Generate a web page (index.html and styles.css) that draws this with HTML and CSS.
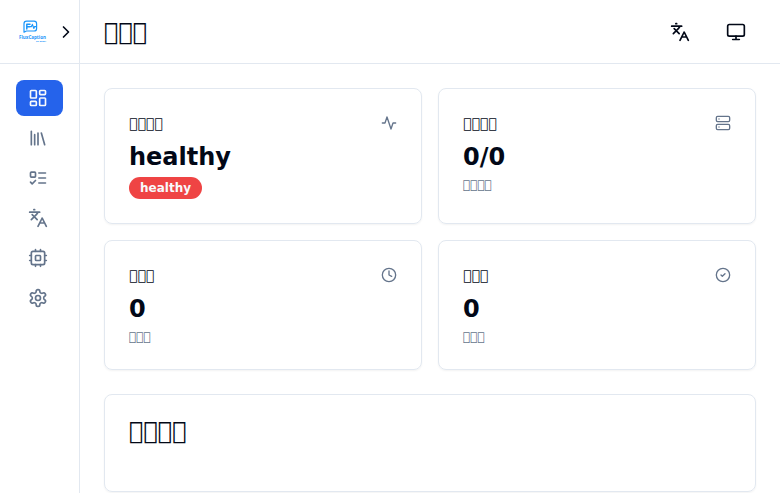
FILE: index.html
```html
<!DOCTYPE html>
<html lang="en">
<head>
<meta charset="utf-8">
<meta name="viewport" content="width=device-width, initial-scale=1">
<title>FluxCaption</title>
<link rel="stylesheet" href="styles.css">
</head>
<body>
<div class="app">
  <aside class="sidebar">
    <div class="brand">
      <svg class="logo" viewBox="0 0 32 32" role="img" aria-label="FluxCaption">
        <path class="logo-line" d="M8 16.2V7.8Q8 5.2 10.6 5.2H18Q20.6 5.2 20.6 7.8V12.4Q20.6 15 18 15H10.4Z"/>
        <path class="logo-line logo-mark" d="M10.8 13V8.2H14M10.8 10.7H13.6"/>
        <path class="logo-line" d="M14.2 10.7H15.3L16.4 8.4L17.8 12.4L18.6 10.6H20"/>
        <text class="logo-name" x="3" y="22.8">FluxCaption</text>
        <text class="logo-by" x="20" y="25.8">by asahi</text>
      </svg>
      <button class="toggle" type="button" aria-label="Expand sidebar">
        <svg class="icon" viewBox="0 0 24 24"><path d="m9 18 6-6-6-6"/></svg>
      </button>
    </div>
    <nav class="nav">
      <a class="nav-link active" href="#dashboard" aria-label="Dashboard">
        <svg class="icon" viewBox="0 0 24 24"><rect width="7" height="9" x="3" y="3" rx="1"/><rect width="7" height="5" x="14" y="3" rx="1"/><rect width="7" height="9" x="14" y="12" rx="1"/><rect width="7" height="5" x="3" y="16" rx="1"/></svg>
      </a>
      <a class="nav-link" href="#library" aria-label="Library">
        <svg class="icon" viewBox="0 0 24 24"><path d="m16 6 4 14M12 6v14M8 8v12M4 4v16"/></svg>
      </a>
      <a class="nav-link" href="#jobs" aria-label="Jobs">
        <svg class="icon" viewBox="0 0 24 24"><rect x="3" y="5" width="6" height="6" rx="1"/><path d="m3 17 2 2 4-4M13 6h8M13 12h8M13 18h8"/></svg>
      </a>
      <a class="nav-link" href="#translate" aria-label="Translate">
        <svg class="icon" viewBox="0 0 24 24"><path d="m5 8 6 6M4 14l6-6 2-3M2 5h12M7 2h1M22 22l-5-10-5 10M14 18h6"/></svg>
      </a>
      <a class="nav-link" href="#models" aria-label="Models">
        <svg class="icon" viewBox="0 0 24 24"><rect width="16" height="16" x="4" y="4" rx="2"/><rect width="6" height="6" x="9" y="9" rx="1"/><path d="M15 2v2M15 20v2M2 15h2M2 9h2M20 15h2M20 9h2M9 2v2M9 20v2"/></svg>
      </a>
      <a class="nav-link" href="#settings" aria-label="Settings">
        <svg class="icon" viewBox="0 0 24 24"><path d="M12.22 2h-.44a2 2 0 0 0-2 2v.18a2 2 0 0 1-1 1.73l-.43.25a2 2 0 0 1-2 0l-.15-.08a2 2 0 0 0-2.73.73l-.22.38a2 2 0 0 0 .73 2.73l.15.1a2 2 0 0 1 1 1.72v.51a2 2 0 0 1-1 1.74l-.15.09a2 2 0 0 0-.73 2.73l.22.38a2 2 0 0 0 2.73.73l.15-.08a2 2 0 0 1 2 0l.43.25a2 2 0 0 1 1 1.73V20a2 2 0 0 0 2 2h.44a2 2 0 0 0 2-2v-.18a2 2 0 0 1 1-1.73l.43-.25a2 2 0 0 1 2 0l.15.08a2 2 0 0 0 2.73-.73l.22-.39a2 2 0 0 0-.73-2.73l-.15-.08a2 2 0 0 1-1-1.74v-.5a2 2 0 0 1 1-1.74l.15-.09a2 2 0 0 0 .73-2.73l-.22-.38a2 2 0 0 0-2.73-.73l-.15.08a2 2 0 0 1-2 0l-.43-.25a2 2 0 0 1-1-1.73V4a2 2 0 0 0-2-2z"/><circle cx="12" cy="12" r="3"/></svg>
      </a>
    </nav>
  </aside>

  <div class="content">
    <header class="topbar">
      <h1 class="page-title">&#xE100;&#xE100;&#xE100;</h1>
      <div class="actions">
        <button class="icon-button" type="button" aria-label="Language">
          <svg class="icon" viewBox="0 0 24 24"><path d="m5 8 6 6M4 14l6-6 2-3M2 5h12M7 2h1M22 22l-5-10-5 10M14 18h6"/></svg>
        </button>
        <button class="icon-button" type="button" aria-label="Theme">
          <svg class="icon" viewBox="0 0 24 24"><rect width="20" height="14" x="2" y="3" rx="2"/><path d="M8 21h8M12 17v4"/></svg>
        </button>
      </div>
    </header>

    <main class="main">
      <div class="stats">
        <section class="card">
          <div class="card-head">
            <h2 class="card-label">&#xE100;&#xE100;&#xE100;&#xE100;</h2>
            <svg class="icon icon-small" viewBox="0 0 24 24"><path d="M22 12h-4l-3 9L9 3l-3 9H2"/></svg>
          </div>
          <div class="value">healthy</div>
          <div class="badge">healthy</div>
        </section>
        <section class="card">
          <div class="card-head">
            <h2 class="card-label">&#xE100;&#xE100;&#xE100;&#xE100;</h2>
            <svg class="icon icon-small" viewBox="0 0 24 24"><rect width="20" height="8" x="2" y="2" rx="2"/><rect width="20" height="8" x="2" y="14" rx="2"/><path d="M6 6h.01M6 18h.01"/></svg>
          </div>
          <div class="value">0/0</div>
          <p class="note">&#xE100;&#xE100;&#xE100;&#xE100;</p>
        </section>
        <section class="card">
          <div class="card-head">
            <h2 class="card-label">&#xE100;&#xE100;&#xE100;</h2>
            <svg class="icon icon-small" viewBox="0 0 24 24"><circle cx="12" cy="12" r="10"/><path d="M12 6v6l4 2"/></svg>
          </div>
          <div class="value">0</div>
          <p class="note">&#xE100;&#xE100;&#xE100;</p>
        </section>
        <section class="card">
          <div class="card-head">
            <h2 class="card-label">&#xE100;&#xE100;&#xE100;</h2>
            <svg class="icon icon-small" viewBox="0 0 24 24"><circle cx="12" cy="12" r="10"/><path d="m9 12 2 2 4-4"/></svg>
          </div>
          <div class="value">0</div>
          <p class="note">&#xE100;&#xE100;&#xE100;</p>
        </section>
      </div>
      <section class="card panel">
        <h2 class="panel-title">&#xE100;&#xE100;&#xE100;&#xE100;</h2>
      </section>
    </main>
  </div>
</div>
</body>
</html>
```

FILE: styles.css
```css
:root {
  --text: #020817;
  --muted: #64748b;
  --border: #e2e8f0;
  --primary: #2563eb;
  --danger: #ef4444;
}

* {
  box-sizing: border-box;
  margin: 0;
  padding: 0;
}

body {
  font-family: "DejaVu Sans", sans-serif;
  font-size: 16px;
  line-height: 24px;
  color: var(--text);
  background: #fff;
}

button {
  border: 0;
  background: none;
  color: inherit;
  cursor: pointer;
}

.app {
  display: flex;
  height: 100vh;
  overflow: hidden;
}

.icon {
  display: block;
  flex: none;
  width: 20px;
  height: 20px;
  fill: none;
  stroke: currentColor;
  stroke-width: 2;
  stroke-linecap: round;
  stroke-linejoin: round;
}

.icon-small {
  width: 16px;
  height: 16px;
  color: var(--muted);
}

.sidebar {
  flex: none;
  width: 80px;
  border-right: 1px solid var(--border);
}

.brand {
  display: flex;
  align-items: center;
  gap: 8px;
  height: 64px;
  padding-left: 16px;
  border-bottom: 1px solid var(--border);
}

.logo {
  flex: none;
  width: 32px;
  height: 32px;
}

.logo-line {
  fill: none;
  stroke: #1c96fa;
  stroke-width: 1.2;
  stroke-linecap: round;
  stroke-linejoin: round;
}

.logo-mark {
  stroke-width: 1.5;
}

.logo-name,
.logo-by {
  fill: #1c96fa;
  font-family: "Open Sans", sans-serif;
  font-weight: 700;
}

.logo-name {
  font-size: 4.5px;
}

.logo-by {
  font-size: 2.4px;
}

.nav {
  display: flex;
  flex-direction: column;
  gap: 4px;
  padding: 16px;
}

.nav-link {
  display: flex;
  padding: 8px 12px;
  border-radius: 8px;
  color: var(--muted);
}

.nav-link.active {
  background: var(--primary);
  color: #f8fafc;
}

.content {
  flex: 1;
  min-width: 0;
  display: flex;
  flex-direction: column;
}

.topbar {
  flex: none;
  display: flex;
  align-items: center;
  justify-content: space-between;
  height: 64px;
  padding: 0 24px;
  border-bottom: 1px solid var(--border);
}

.page-title {
  font-size: 24px;
  font-weight: 600;
  line-height: 32px;
}

.actions {
  display: flex;
  gap: 16px;
}

.icon-button {
  display: grid;
  place-items: center;
  width: 40px;
  height: 40px;
}

.main {
  flex: 1;
  display: flex;
  flex-direction: column;
  gap: 24px;
  padding: 24px;
  overflow: auto;
  scrollbar-width: none;
}

.stats {
  display: grid;
  grid-template-columns: repeat(2, 1fr);
  gap: 16px;
}

.card {
  padding: 24px;
  border: 1px solid var(--border);
  border-radius: 8px;
  box-shadow: 0 1px 2px rgba(0, 0, 0, 0.05);
}

.card-head {
  display: flex;
  align-items: center;
  justify-content: space-between;
  padding-bottom: 8px;
}

.card-label {
  font-size: 14px;
  font-weight: 500;
  line-height: 20px;
}

.value {
  font-size: 24px;
  font-weight: 700;
  line-height: 32px;
}

.badge {
  width: fit-content;
  margin-top: 4px;
  padding: 3px 11px;
  border-radius: 11px;
  background: var(--danger);
  color: #f8fafc;
  font-size: 12px;
  font-weight: 600;
  line-height: 16px;
}

.note {
  margin-top: 4px;
  font-size: 12px;
  line-height: 16px;
  color: var(--muted);
}

.panel {
  flex: none;
  padding-bottom: 48px;
}

.panel-title {
  font-size: 24px;
  font-weight: 600;
  line-height: 24px;
}
```
